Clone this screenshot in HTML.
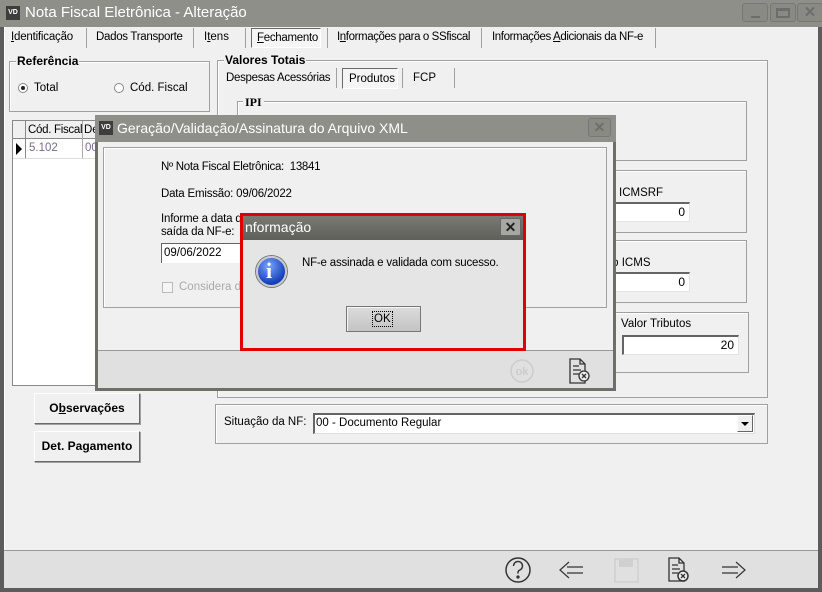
<!DOCTYPE html>
<html><head><meta charset="utf-8"><style>
*{box-sizing:border-box;margin:0;padding:0}
body{width:822px;height:592px;position:relative;overflow:hidden;background:#5c5c5c;font-family:"Liberation Sans",sans-serif;font-size:11px;color:#000}
.a{position:absolute}
.t{font-size:11.5px;white-space:nowrap}
.grp{position:absolute;border:1px solid #a0a0a0;box-shadow:inset 1px 1px 0 #fff}
.gt{position:absolute;background:#f0f0f0;font-weight:bold;font-size:12px;padding:0 1px}
.inp{position:absolute;background:#fff;border-top:2px solid #646464;border-left:2px solid #646464;border-right:1px solid #e3e3e3;border-bottom:1px solid #e3e3e3;text-align:right;padding-right:4px;font-size:12px;line-height:16px}
.btn{position:absolute;background:#f0f0f0;border:1px solid;border-color:#fff #6a6a6a #6a6a6a #fff;box-shadow:1px 1px 0 #a0a0a0;font-weight:bold;font-size:12px;text-align:center}
.tb{position:absolute;border-radius:3px;border:1px solid #777;width:26px;height:19px;background:#8a8a84}
</style></head><body>
<div class="a" style="left:0;top:0;width:822px;height:27px;background:#8f8f89"></div>
<div class="a" style="left:6px;top:6px;width:14px;height:14px;background:#3d3d3d;color:#fff;font-size:7px;font-weight:bold;line-height:14px;text-align:center">VD</div>
<div class="a" style="left:25px;top:4px;font-size:15px;color:#fff">Nota Fiscal Eletrônica - Alteração</div>
<div class="tb" style="left:742px;top:3px"><div class="a" style="left:8px;top:12px;width:9px;height:2px;background:#6d6d6d"></div></div>
<div class="tb" style="left:770px;top:3px"><div class="a" style="left:5px;top:4px;width:14px;height:10px;border:2px solid #6d6d6d;border-top-width:3px"></div></div>
<div class="tb" style="left:797px;top:3px;color:#6d6d6d;font-weight:bold;font-size:15px;text-align:center;line-height:17px">✕</div>
<div class="a" style="left:4px;top:27px;width:814px;height:523px;background:#f0f0f0;border-left:1px solid #fff"></div>
<div class="a" style="left:4px;top:550px;width:814px;height:38px;background:#e0e0e0;border-top:1px solid #999"></div>
<!-- tabs -->
<div class="a t" style="left:11px;top:31px;letter-spacing:-0.2px"><u>I</u>dentificação</div>
<div class="a" style="left:86px;top:28px;width:1px;height:20px;background:#a0a0a0"></div>
<div class="a t" style="left:96px;top:31px;letter-spacing:-0.3px">Dados Transporte</div>
<div class="a" style="left:193px;top:28px;width:1px;height:20px;background:#a0a0a0"></div>
<div class="a t" style="left:204px;top:31px">I<u>t</u>ens</div>
<div class="a" style="left:245px;top:28px;width:1px;height:20px;background:#a0a0a0"></div>
<div class="a" style="left:251px;top:28px;width:70px;height:20px;border:1px solid;border-color:#6a6a6a #fff #fff #6a6a6a;background:#f5f5f5"></div>
<div class="a t" style="left:257px;top:32px;letter-spacing:-0.3px"><u>F</u>echamento</div>
<div class="a" style="left:327px;top:28px;width:1px;height:20px;background:#a0a0a0"></div>
<div class="a t" style="left:337px;top:31px;letter-spacing:-0.4px">I<u>n</u>formações para o SSfiscal</div>
<div class="a" style="left:481px;top:28px;width:1px;height:20px;background:#a0a0a0"></div>
<div class="a t" style="left:492px;top:31px;letter-spacing:-0.4px">Informações <u>A</u>dicionais da NF-e</div>
<div class="a" style="left:655px;top:28px;width:1px;height:20px;background:#a0a0a0"></div>
<!-- Referência -->
<div class="grp" style="left:9px;top:61px;width:201px;height:51px"></div>
<div class="gt" style="left:16px;top:54px">Referência</div>
<div class="a" style="left:18px;top:83px;width:10px;height:10px;border-radius:50%;border:1px solid #888;background:#fff"><div class="a" style="left:2px;top:2px;width:4px;height:4px;border-radius:50%;background:#222"></div></div>
<div class="a t" style="left:34px;top:82px">Total</div>
<div class="a" style="left:114px;top:83px;width:10px;height:10px;border-radius:50%;border:1px solid #888;background:#fff"></div>
<div class="a t" style="left:130px;top:82px">Cód. Fiscal</div>
<!-- grid -->
<div class="a" style="left:12px;top:120px;width:90px;height:266px;background:#fff;border:1px solid #888"></div>
<div class="a" style="left:13px;top:121px;width:90px;height:18px;background:#f0f0f0;border-bottom:1px solid #888"></div>
<div class="a" style="left:25px;top:121px;width:1px;height:38px;background:#888"></div>
<div class="a" style="left:82px;top:121px;width:1px;height:38px;background:#aaa"></div>
<div class="a t" style="left:28px;top:124px;letter-spacing:-0.3px">Cód. Fiscal</div>
<div class="a t" style="left:84px;top:124px">De</div>
<div class="a" style="left:13px;top:158px;width:90px;height:1px;background:#ddd"></div>
<div class="a" style="left:16px;top:143px;width:0;height:0;border-left:6px solid #000;border-top:6px solid transparent;border-bottom:6px solid transparent"></div>
<div class="a t" style="left:29px;top:142px;color:#7a6b8a">5.102</div>
<div class="a t" style="left:85px;top:142px;color:#7a6b8a">00</div>
<!-- Valores Totais -->
<div class="grp" style="left:217px;top:60px;width:551px;height:338px"></div>
<div class="gt" style="left:224px;top:53px">Valores Totais</div>
<div class="a t" style="left:226px;top:72px;letter-spacing:-0.3px">Despesas Acessórias</div>
<div class="a" style="left:336px;top:68px;width:1px;height:20px;background:#a0a0a0"></div>
<div class="a" style="left:342px;top:68px;width:56px;height:21px;border:1px solid;border-color:#6a6a6a #fff #fff #6a6a6a;background:#f5f5f5"></div>
<div class="a t" style="left:349px;top:73px">Produtos</div>
<div class="a" style="left:402px;top:68px;width:1px;height:20px;background:#a0a0a0"></div>
<div class="a t" style="left:413px;top:72px">FCP</div>
<div class="a" style="left:454px;top:68px;width:1px;height:20px;background:#a0a0a0"></div>
<div class="grp" style="left:237px;top:101px;width:510px;height:60px"></div>
<div class="a" style="left:243px;top:95px;background:#f0f0f0;font-weight:bold;font-size:12px;font-family:'Liberation Serif',serif;padding:0 2px">IPI</div>
<div class="grp" style="left:600px;top:170px;width:147px;height:63px"></div>
<div class="a t" style="left:619px;top:187px">ICMSRF</div>
<div class="inp" style="left:600px;top:202px;width:90px;height:20px">0</div>
<div class="grp" style="left:600px;top:240px;width:147px;height:63px"></div>
<div class="a t" style="left:600px;top:257px">ção ICMS</div>
<div class="inp" style="left:600px;top:272px;width:90px;height:20px">0</div>
<div class="grp" style="left:600px;top:312px;width:149px;height:61px"></div>
<div class="a t" style="left:621px;top:318px">Valor Tributos</div>
<div class="inp" style="left:622px;top:335px;width:117px;height:20px">20</div>
<!-- buttons -->
<div class="btn" style="left:34px;top:393px;width:106px;height:31px;line-height:29px">O<u>b</u>servações</div>
<div class="btn" style="left:34px;top:431px;width:106px;height:31px;line-height:29px">Det. Pa<u>g</u>amento</div>
<!-- Situação -->
<div class="grp" style="left:215px;top:404px;width:553px;height:40px"></div>
<div class="a t" style="left:224px;top:416px">Situação da NF:</div>
<div class="a t" style="left:313px;top:413px;width:442px;height:21px;background:#fff;border-top:2px solid #646464;border-left:2px solid #646464;border-right:1px solid #ddd;border-bottom:1px solid #ddd;line-height:17px;padding-left:1px">00 - Documento Regular</div>
<div class="a" style="left:737px;top:415px;width:16px;height:17px;background:#f0f0f0;border:1px solid;border-color:#fff #666 #666 #fff"><div class="a" style="left:3px;top:6px;border-left:4px solid transparent;border-right:4px solid transparent;border-top:4px solid #000"></div></div>
<!-- toolbar icons -->
<svg class="a" style="left:500px;top:553px" width="260" height="34" viewBox="0 0 260 34" fill="none" stroke="#333" stroke-width="1.5">
<circle cx="18" cy="17" r="12"/>
<path d="M13.5 13a4.5 4.5 0 1 1 6 4.2c-1.5.7-1.5 1.6-1.5 3.3" />
<circle cx="18" cy="24" r=".9" fill="#333"/>
<path d="M83 14H67M83 20H67M69 9l-9 8 9 8" stroke-width="1.2"/>
<rect x="115" y="6" width="23" height="23" fill="none" stroke="#d0d0d0" stroke-width="1.6"/>
<rect x="119" y="6" width="14" height="8" fill="#d0d0d0" stroke="none"/>
<path d="M169 5h10l5 5v18h-15z M179 5v5h5 M172 12h6 M172 16h8 M172 20h6" stroke-width="1.3"/>
<circle cx="183" cy="23" r="5" fill="#eee"/><path d="M181 21l4 4M185 21l-4 4" stroke-width="1.3"/>
<path d="M222 14h16M222 20h16M236 9l9 8-9 8" stroke-width="1.2"/>
</svg>
<!-- Geração dialog -->
<div class="a" style="left:95px;top:115px;width:521px;height:276px;background:#f0f0f0;border:3px solid #6f6f6a;border-top:none"></div>
<div class="a" style="left:95px;top:115px;width:521px;height:27px;background:#8f8f89"></div>
<div class="a" style="left:99px;top:121px;width:14px;height:14px;background:#3d3d3d;color:#fff;font-size:7px;font-weight:bold;line-height:14px;text-align:center">VD</div>
<div class="a" style="left:117px;top:120px;font-size:14px;color:#fff">Geração/Validação/Assinatura do Arquivo XML</div>
<div class="tb" style="left:588px;top:118px;width:23px;color:#6d6d6d;font-weight:bold;font-size:14px;text-align:center;line-height:17px">✕</div>
<div class="a" style="left:103px;top:147px;width:504px;height:161px;border:1px solid #a0a0a0;box-shadow:inset 1px 1px 0 #fff"></div>
<div class="a t" style="left:161px;top:161px;letter-spacing:-0.3px">Nº Nota Fiscal Eletrônica: &nbsp;13841</div>
<div class="a t" style="left:161px;top:188px;letter-spacing:-0.2px">Data Emissão: 09/06/2022</div>
<div class="a t" style="left:161px;top:213px;line-height:13px;letter-spacing:-0.2px">Informe a data d<br>saída da NF-e:</div>
<div class="a t" style="left:161px;top:243px;width:82px;height:20px;background:#fff;border-top:1px solid #646464;border-left:1px solid #646464;line-height:18px;padding-left:2px">09/06/2022</div>
<div class="a" style="left:162px;top:282px;width:11px;height:11px;border:1px solid #bbb;background:#f5f5f5"></div>
<div class="a t" style="left:179px;top:281px;color:#aaa">Considera de</div>
<div class="a" style="left:98px;top:350px;width:515px;height:38px;background:#e0e0e0;border-top:1px solid #999"></div>
<svg class="a" style="left:505px;top:355px" width="100" height="30" fill="none">
<circle cx="17" cy="16" r="11" stroke="#ccc" stroke-width="1.5"/>
<text x="17" y="20" font-family="Liberation Sans" font-weight="bold" font-size="11" fill="#ccc" stroke="none" text-anchor="middle">ok</text>
<path d="M65 4h10l5 5v19h-15z M75 4v5h5 M68 11h6 M68 15h8 M68 19h6" stroke="#333" stroke-width="1.3"/>
<circle cx="79" cy="21" r="5" fill="#eee" stroke="#333" stroke-width="1.3"/><path d="M77 19l4 4M81 19l-4 4" stroke="#333" stroke-width="1.3"/>
</svg>
<!-- Info dialog -->
<div class="a" style="left:240px;top:213px;width:286px;height:138px;background:#e5e5e5;border:3px solid #e00000"></div>
<div class="a" style="left:243px;top:216px;width:280px;height:24px;background:linear-gradient(#7a7a74,#5f5f5a)"></div>
<div class="a" style="left:245px;top:219px;font-size:14px;color:#fff">nformação</div>
<div class="a" style="left:500px;top:218px;width:21px;height:18px;border:1px solid #666;background:#a7a7a2;border-radius:2px;font-weight:bold;font-size:14px;text-align:center;line-height:16px;color:#222">✕</div>
<div class="a" style="left:256px;top:256px;width:31px;height:31px;border-radius:50%;background:radial-gradient(circle at 40% 30%,#7aa4ff,#1540b8 70%);border:2px solid #c8c8d0;box-shadow:0 0 0 1px #777"></div>
<div class="a" style="left:266px;top:258px;color:#fff;font-weight:bold;font-size:22px;font-family:'Liberation Serif',serif">i</div>
<div class="a t" style="left:302px;top:257px;letter-spacing:-0.2px">NF-e assinada e validada com sucesso.</div>
<div class="a" style="left:346px;top:306px;width:75px;height:26px;background:linear-gradient(#dcdcdc,#c4c4c4);border:1px solid #777;box-shadow:inset 1px 1px 0 #f5f5f5"></div>
<div class="a t" style="left:372px;top:311px;border:1px dotted #000;padding:0 1px;line-height:14px">OK</div>
</body></html>
